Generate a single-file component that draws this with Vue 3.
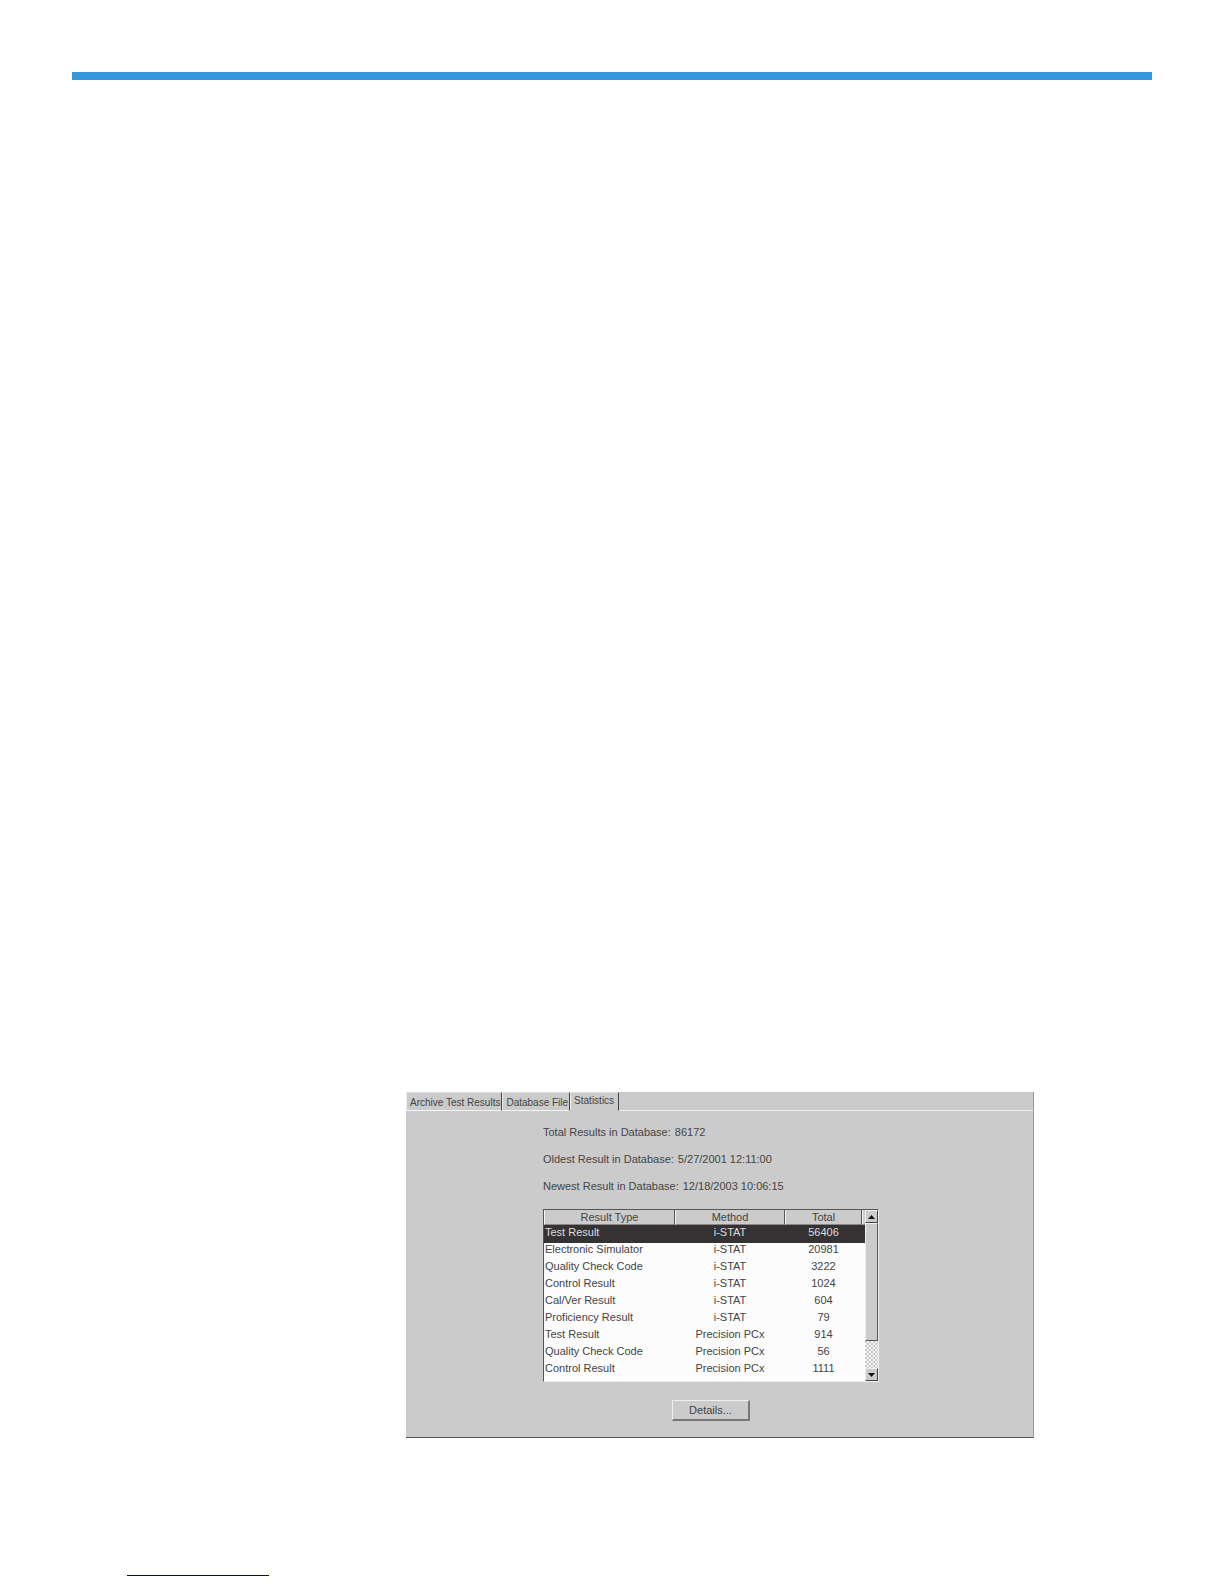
<template>
  <div class="page">
    <div class="top-rule"></div>

    <main class="content">
      <section class="panel">
        <div class="tabs" role="tablist">
          <button
            v-for="tab in tabs"
            :key="tab"
            type="button"
            role="tab"
            class="tab"
            :class="{ active: tab === activeTab }"
            :aria-selected="tab === activeTab"
            @click="activeTab = tab"
          >{{ tab }}</button>
          <span class="tab-fill"></span>
        </div>

        <div class="panel-body">
          <dl class="summary">
            <div v-for="item in summary" :key="item.label" class="summary-row">
              <dt>{{ item.label }}</dt>
              <dd>{{ item.value }}</dd>
            </div>
          </dl>

          <div class="list">
            <table class="results">
              <colgroup>
                <col class="col-type" />
                <col class="col-method" />
                <col class="col-total" />
                <col />
              </colgroup>
              <thead>
                <tr>
                  <th scope="col">Result Type</th>
                  <th scope="col">Method</th>
                  <th scope="col">Total</th>
                  <td></td>
                </tr>
              </thead>
              <tbody>
                <tr
                  v-for="(row, index) in rows"
                  :key="index"
                  :class="{ selected: index === selectedRow }"
                  @click="selectedRow = index"
                >
                  <td>{{ row.type }}</td>
                  <td>{{ row.method }}</td>
                  <td>{{ row.total }}</td>
                  <td></td>
                </tr>
              </tbody>
            </table>

            <div class="scrollbar">
              <button type="button" class="arrow" aria-label="Scroll up">
                <svg width="7" height="4" viewBox="0 0 7 4"><path d="M0 4L3.5 0L7 4Z" /></svg>
              </button>
              <div class="track">
                <div class="thumb"></div>
              </div>
              <button type="button" class="arrow" aria-label="Scroll down">
                <svg width="7" height="4" viewBox="0 0 7 4"><path d="M0 0L3.5 4L7 0Z" /></svg>
              </button>
            </div>
          </div>

          <div class="actions">
            <button type="button" class="details">Details...</button>
          </div>
        </div>
      </section>
    </main>

    <footer class="footer">
      <div class="footer-line"></div>
    </footer>
  </div>
</template>

<script setup>
import { ref } from 'vue';

const tabs = ['Archive Test Results', 'Database File', 'Statistics'];
const activeTab = ref('Statistics');
const selectedRow = ref(0);

const summary = [
  { label: 'Total Results in Database:', value: '86172' },
  { label: 'Oldest Result in Database:', value: '5/27/2001 12:11:00' },
  { label: 'Newest Result in Database:', value: '12/18/2003 10:06:15' }
];

const rows = ref([
  { type: 'Test Result', method: 'i-STAT', total: 56406 },
  { type: 'Electronic Simulator', method: 'i-STAT', total: 20981 },
  { type: 'Quality Check Code', method: 'i-STAT', total: 3222 },
  { type: 'Control Result', method: 'i-STAT', total: 1024 },
  { type: 'Cal/Ver Result', method: 'i-STAT', total: 604 },
  { type: 'Proficiency Result', method: 'i-STAT', total: 79 },
  { type: 'Test Result', method: 'Precision PCx', total: 914 },
  { type: 'Quality Check Code', method: 'Precision PCx', total: 56 },
  { type: 'Control Result', method: 'Precision PCx', total: 1111 }
]);
</script>

<style>
body {
  margin: 0;
  background: #fff;
}
</style>

<style scoped>
.page {
  display: flex;
  flex-direction: column;
  box-sizing: border-box;
  min-height: 100vh;
  padding: 72px 72px 8px;
  font-family: 'Liberation Sans', Arial, sans-serif;
  font-size: 11px;
  line-height: 14px;
  color: #444;
}

button {
  margin: 0;
  padding: 0;
  border: 0;
  background: #cbcbcb;
  color: inherit;
  font: inherit;
}

.top-rule {
  height: 8px;
  background: #3498db;
}

.content {
  display: flex;
  flex: 1;
  flex-direction: column;
  justify-content: flex-end;
  padding: 0 118px 0 334px;
}

.panel {
  box-sizing: border-box;
  border-right: 1px solid #999;
  border-bottom: 1px solid #555;
  background: #cbcbcb;
}

/* tabs */
.tabs {
  display: flex;
  height: 19px;
}

.tab {
  box-sizing: border-box;
  padding: 3px 1px 1px 3px;
  border-top: 1px solid #ddd;
  border-right: 1px solid #444;
  border-bottom: 1px solid #f5f5f5;
  border-left: 1px solid #eee;
  font-size: 10px;
  white-space: nowrap;
}

.tab.active {
  padding: 1px 4px 2px 3px;
  border-bottom-color: #cbcbcb;
}

.tab-fill {
  flex: 1;
  border-bottom: 1px solid #f0f0f0;
}

.panel-body {
  padding: 14px 0 16px 137px;
}

/* summary */
.summary {
  display: flex;
  flex-direction: column;
  gap: 13px;
  margin: 0 0 16px;
}

.summary-row {
  display: flex;
  gap: 4px;
}

.summary dd {
  margin: 0;
}

/* result list */
.list {
  display: flex;
  box-sizing: border-box;
  width: 336px;
  height: 173px;
  border: 1px solid #555;
  border-right-color: #eee;
  border-bottom-color: #eee;
  background: #fcfcfc;
}

.results {
  flex: 1;
  align-self: flex-start;
  border-collapse: separate;
  border-spacing: 0;
  table-layout: fixed;
  line-height: 12px;
}

.col-type {
  width: 131px;
}

.col-method {
  width: 110px;
}

.col-total {
  width: 77px;
}

.results th,
.results td {
  box-sizing: border-box;
  padding: 0 0 5px;
  text-align: center;
  white-space: nowrap;
}

.results th,
.results thead td {
  height: 15px;
  padding: 0 0 1px;
  border-right: 1px solid #555;
  border-bottom: 1px solid #888;
  border-left: 1px solid #f5f5f5;
  background: #cbcbcb;
  font-weight: normal;
}

.results thead td {
  border-right: 0;
}

.results tbody td:first-child {
  padding-left: 1px;
  text-align: left;
}

.results .selected td {
  padding-top: 1px;
  background: #353234;
  color: #ddd;
}

/* scrollbar */
.scrollbar {
  display: flex;
  flex-direction: column;
  width: 13px;
}

.arrow {
  display: flex;
  align-items: center;
  justify-content: center;
  box-sizing: border-box;
  height: 13px;
  border: 1px solid #eee;
  border-right-color: #444;
  border-bottom-color: #444;
}

.arrow path {
  fill: #111;
}

.track {
  flex: 1;
  background: repeating-conic-gradient(#c8c8c8 0 25%, #f5f5f5 0 50%) 0 0 / 4px 4px;
}

.thumb {
  box-sizing: border-box;
  height: 118px;
  border: 1px solid #eee;
  border-right-color: #555;
  border-bottom-color: #555;
  background: #cbcbcb;
}

.actions {
  width: 336px;
  padding-top: 18px;
  text-align: center;
}

.details {
  box-sizing: border-box;
  width: 78px;
  height: 21px;
  border: 1px solid #f0f0f0;
  border-right: 2px solid #777;
  border-bottom: 2px solid #777;
}

.footer {
  padding: 137px 0 0 55px;
}

.footer-line {
  width: 142px;
  height: 1px;
  background: #000080;
}
</style>
